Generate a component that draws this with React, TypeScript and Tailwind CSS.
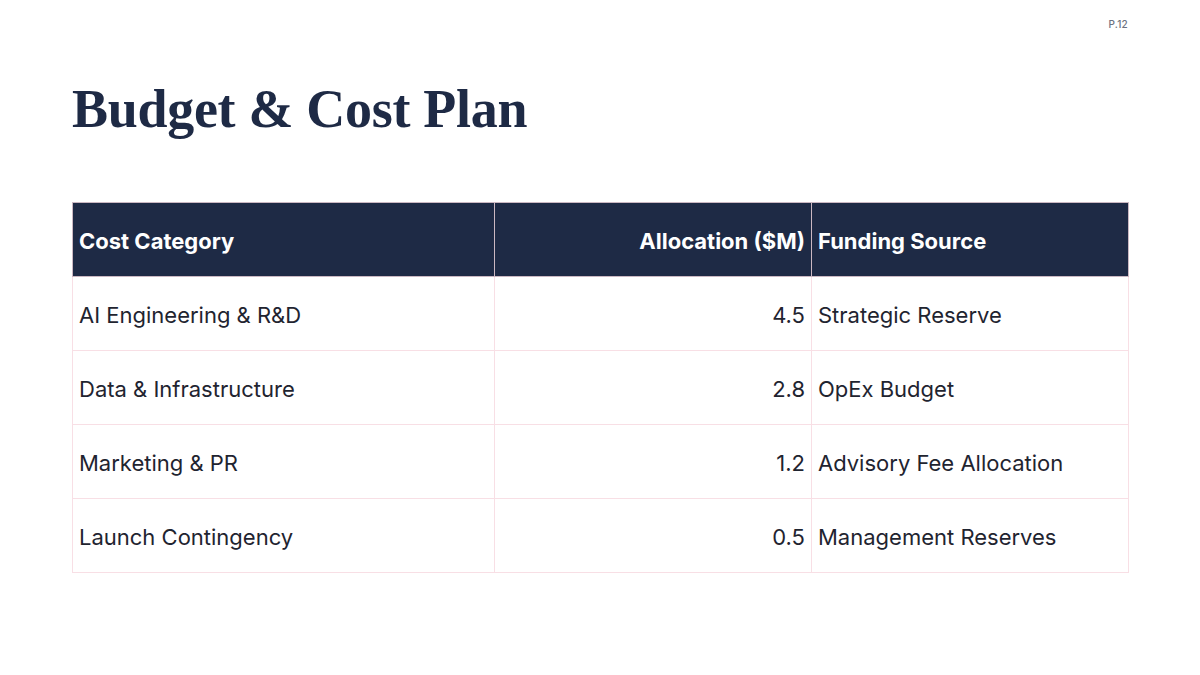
import React from "react";

const rows = [
  ["AI Engineering & R&D", "4.5", "Strategic Reserve"],
  ["Data & Infrastructure", "2.8", "OpEx Budget"],
  ["Marketing & PR", "1.2", "Advisory Fee Allocation"],
  ["Launch Contingency", "0.5", "Management Reserves"],
];

export default function App() {
  return (
    <div
      className="w-[1200px] h-[675px] bg-white relative overflow-hidden px-[72px]"
      style={{ fontFamily: "Inter, 'Noto Sans', sans-serif" }}
    >
      <div className="absolute top-[17px] right-[72px] text-[10px] font-medium text-[#6b7280] tracking-wide">
        P.12
      </div>
      <h1
        className="pt-[77px] text-[54px] leading-[64px] font-bold text-[#1e2a45] tracking-[-0.3px]"
        style={{ fontFamily: "'Liberation Serif', 'DejaVu Serif', serif" }}
      >
        Budget &amp; Cost Plan
      </h1>
      <table className="mt-[61px] w-[1056px] table-fixed border-collapse text-[22px]">
        <colgroup>
          <col className="w-[422px]" />
          <col className="w-[317px]" />
          <col className="w-[317px]" />
        </colgroup>
        <thead>
          <tr className="h-[74px] bg-[#1e2a45] text-white">
            <th className="border border-[#cbb8c2] px-[6px] pt-[3px] text-left font-bold">Cost Category</th>
            <th className="border border-[#cbb8c2] px-[6px] pt-[3px] text-right font-bold">Allocation ($M)</th>
            <th className="border border-[#cbb8c2] px-[6px] pt-[3px] text-left font-bold">Funding Source</th>
          </tr>
        </thead>
        <tbody className="text-[#1f2430]">
          {rows.map((r) => (
            <tr key={r[0]} className="h-[74px]">
              <td className="border border-[#f8dfe5] px-[6px] pt-[3px] text-left">{r[0]}</td>
              <td className="border border-[#f8dfe5] px-[6px] pt-[3px] text-right">{r[1]}</td>
              <td className="border border-[#f8dfe5] px-[6px] pt-[3px] text-left">{r[2]}</td>
            </tr>
          ))}
        </tbody>
      </table>
    </div>
  );
}
